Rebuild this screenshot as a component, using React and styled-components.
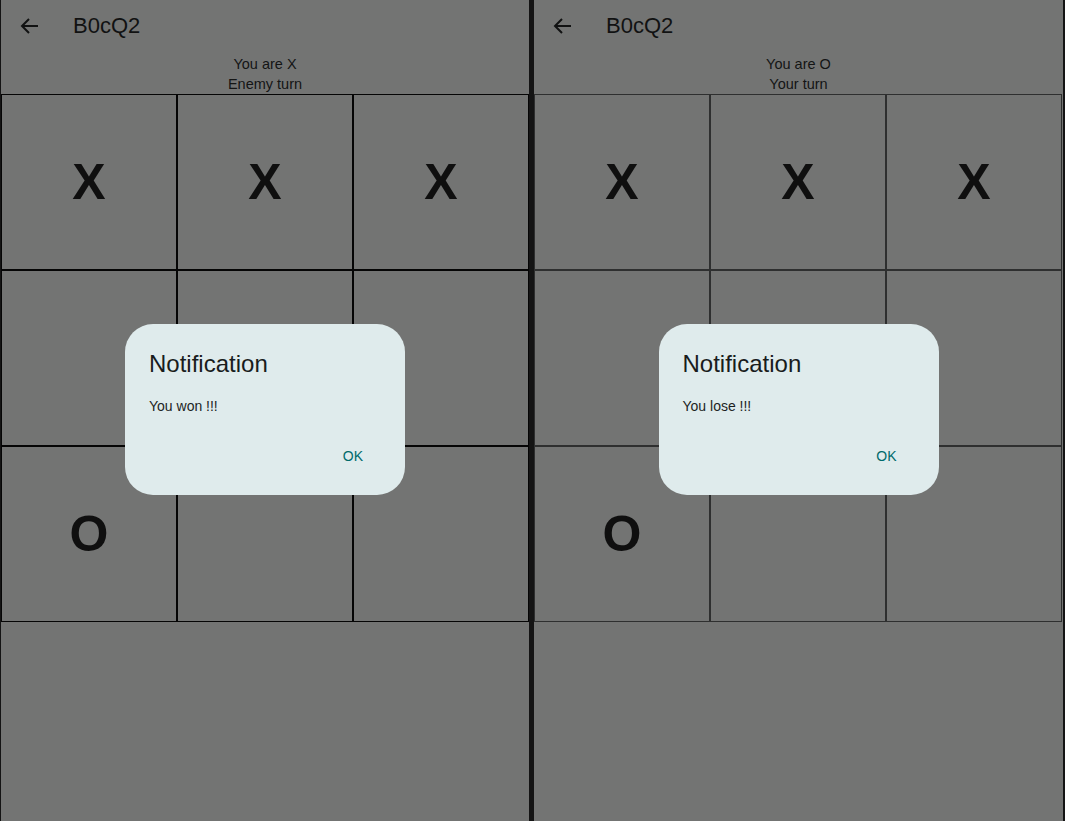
import React from 'react';
import styled, { createGlobalStyle } from 'styled-components';

const GlobalStyle = createGlobalStyle`
  html, body {
    margin: 0;
    padding: 0;
    background: #141414;
    font-family: 'Liberation Sans', Arial, sans-serif;
  }
`;

const Page = styled.div`
  display: flex;
  gap: 5px;
  height: 821px;
  width: 1065px;
  overflow: hidden;
`;

const Screen = styled.div`
  position: relative;
  flex: none;
  width: ${(p) => p.width}px;
  margin-left: ${(p) => p.offset}px;
  height: 821px;
  background: #737473;
  display: flex;
  flex-direction: column;
`;

const Header = styled.div`
  display: flex;
  align-items: center;
  height: 52px;
  padding-left: 17px;
  gap: 31px;
`;

const Title = styled.div`
  font-size: 22px;
  color: #111212;
`;

const Status = styled.div`
  text-align: center;
  font-size: 14.5px;
  line-height: 20px;
  color: #141515;
  padding-top: 2px;
  height: 40px;
`;

const Board = styled.div`
  display: grid;
  grid-template-columns: repeat(3, 176px);
  grid-template-rows: repeat(3, 176px);
  width: 528px;
`;

const Cell = styled.div`
  box-sizing: border-box;
  border: 1px solid ${(p) => p.line};
  display: flex;
  align-items: center;
  justify-content: center;
  font-size: 50px;
  font-weight: 700;
  color: #0f0f0f;
`;

const Dialog = styled.div`
  position: absolute;
  left: 50%;
  top: 324px;
  transform: translateX(-50%);
  width: 280px;
  height: 171px;
  box-sizing: border-box;
  border-radius: 28px;
  background: #dfebec;
  padding: 24px 24px 0 24px;
  display: flex;
  flex-direction: column;
`;

const DialogTitle = styled.div`
  font-size: 24px;
  line-height: 32px;
  color: #191c1c;
`;

const DialogBody = styled.div`
  margin-top: 16px;
  font-size: 14px;
  line-height: 20px;
  color: #1c1f1f;
`;

const Actions = styled.div`
  display: flex;
  justify-content: flex-end;
  margin-top: 32px;
`;

const TextButton = styled.div`
  font-size: 14px;
  color: #006a6b;
  padding: 0 18px 0 0;
`;

const BackArrow = () => (
  <svg width="24" height="24" viewBox="0 0 24 24" fill="none" stroke="#111212" strokeWidth="2">
    <path d="M20 12H4.5" />
    <path d="M11 5l-7 7 7 7" />
  </svg>
);

function GameScreen({ width, offset, you, turn, result, line }) {
  const cells = ['X', 'X', 'X', '', '', '', 'O', '', ''];
  return (
    <Screen width={width} offset={offset}>
      <Header>
        <BackArrow />
        <Title>B0cQ2</Title>
      </Header>
      <Status>
        You are {you}
        <br />
        {turn}
      </Status>
      <Board>
        {cells.map((c, i) => (
          <Cell key={i} line={line}>
            {c}
          </Cell>
        ))}
      </Board>
      <Dialog>
        <DialogTitle>Notification</DialogTitle>
        <DialogBody>{result}</DialogBody>
        <Actions>
          <TextButton>OK</TextButton>
        </Actions>
      </Dialog>
    </Screen>
  );
}

export default function App() {
  return (
    <>
      <GlobalStyle />
      <Page>
        <GameScreen width={528} offset={1} you="X" turn="Enemy turn" result="You won !!!" line="#050505" />
        <GameScreen width={529} offset={0} you="O" turn="Your turn" result="You lose !!!" line="#2e2f2f" />
      </Page>
    </>
  );
}
